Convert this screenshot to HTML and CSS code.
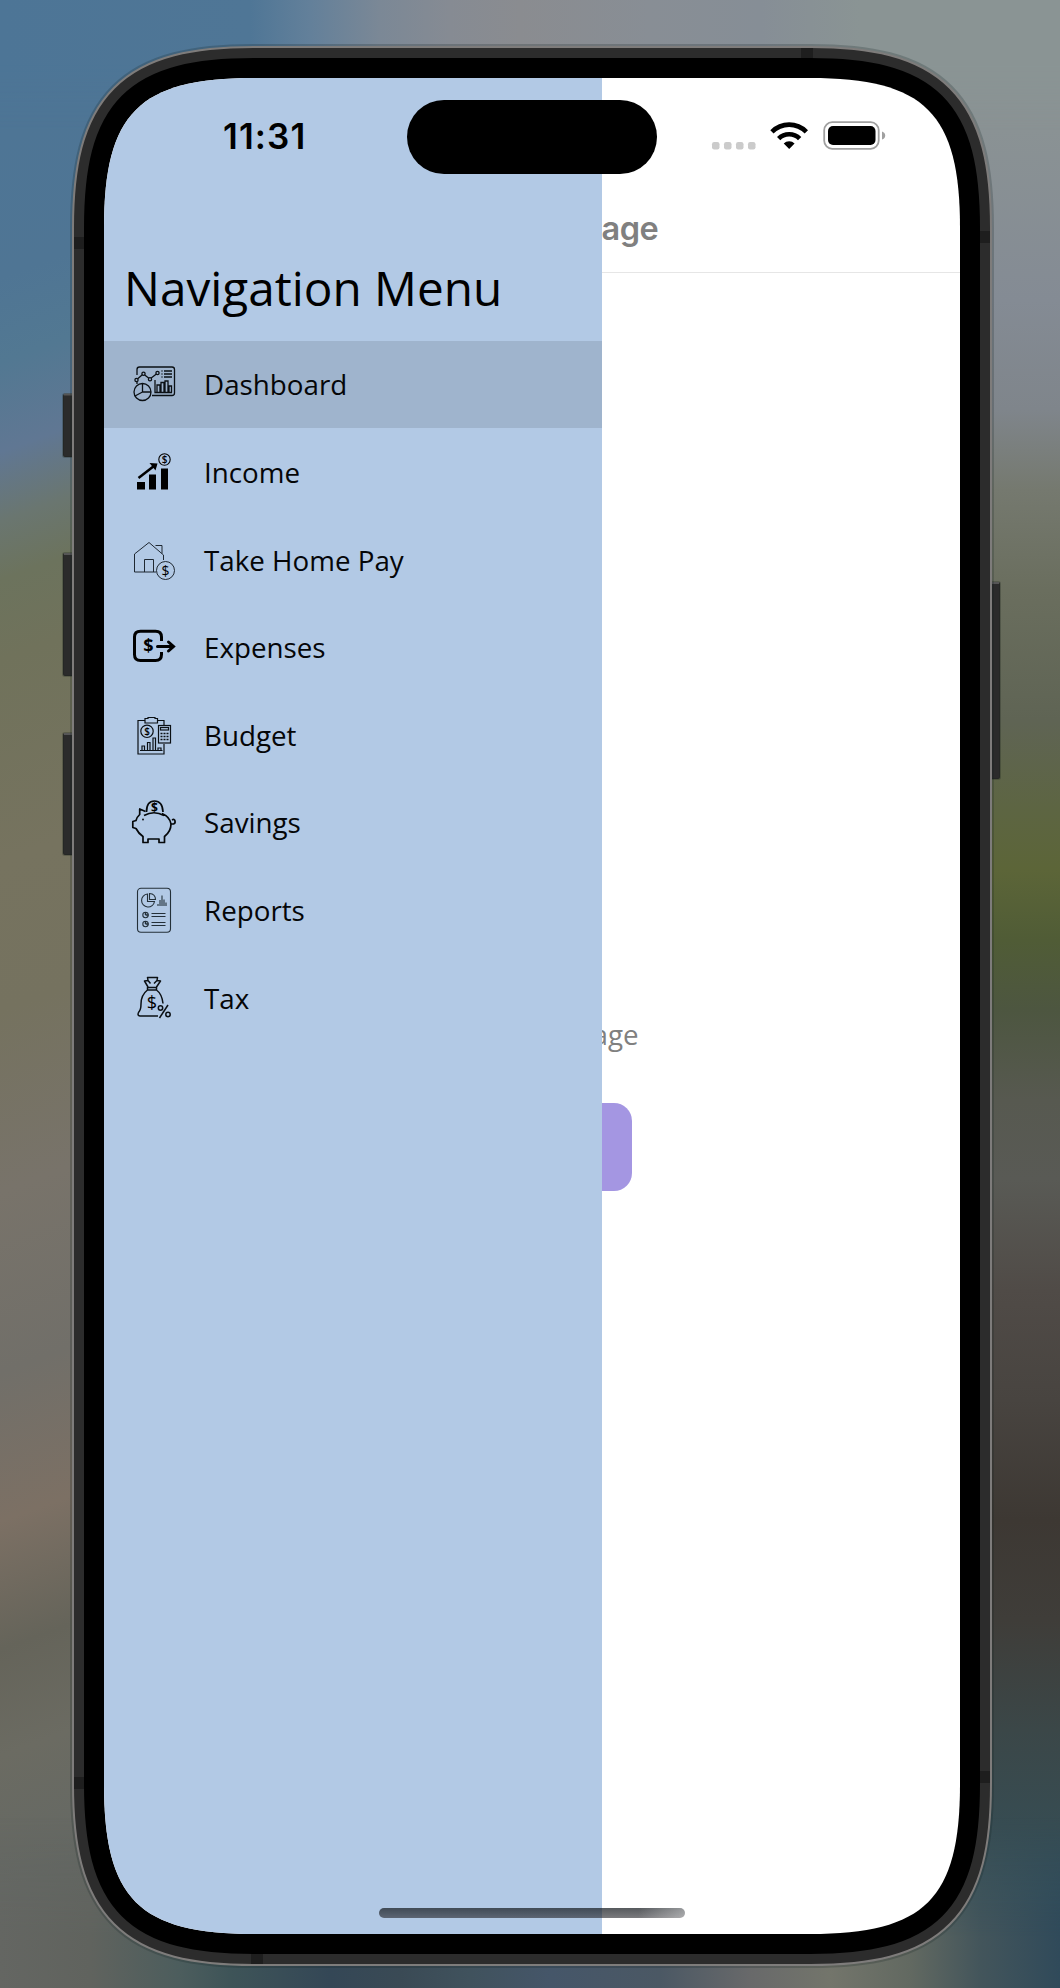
FILE: index.html
```html
<!DOCTYPE html>
<html lang="en">
<head>
<meta charset="utf-8">
<title>Navigation Menu</title>
<link rel="stylesheet" href="styles.css">
</head>
<body>
<div class="backdrop"><div class="side side-left"></div><div class="side side-right"></div></div>
<div class="edge edge-top"></div>
<div class="edge edge-bottom"></div>

<svg class="bezel" viewBox="0 0 1060 1988" aria-hidden="true">
  <defs>
    <path id="outline" transform="translate(104 78)" d="M150 0H706C821 0 856 35 856 150V1706C856 1821 821 1856 706 1856H150C35 1856 0 1821 0 1706V150C0 35 35 0 150 0Z"/>
  </defs>
  <g class="button">
    <rect x="63" y="394" width="12" height="63" rx="2"/>
    <rect x="63" y="553" width="12" height="123" rx="2"/>
    <rect x="63" y="733" width="12" height="122" rx="2"/>
    <rect x="988" y="582" width="12" height="197" rx="2"/>
  </g>
  <g class="button-light">
    <path d="M64 394.500h8M64 554h8M64 734h8M992 583h7"/>
  </g>
  <use href="#outline" class="ring ring-shadow"/>
  <use href="#outline" class="ring ring-rim"/>
  <use href="#outline" class="ring ring-frame"/>
  <path class="antenna" d="M74 237h12v12H74zM74 1777h12v12H74zM801 48h12v11h-12zM979 231h11v12h-11zM979 1771h11v12h-11zM251 1953h12v11h-12z"/>
  <use href="#outline" class="ring ring-glass"/>
</svg>

<main class="screen">
  <section class="page">
    <header class="page-header"><h2 class="page-title">Dashboard Page</h2></header>
    <div class="page-body">
      <p class="page-text">Dashboard Page</p>
      <div class="page-button"></div>
    </div>
  </section>

  <nav class="drawer">
    <h1 class="drawer-title">Navigation Menu</h1>
    <ul class="menu">
      <li class="item active">
        <svg class="icon" viewBox="0 0 48 48"><g fill="none" stroke="#0b1014" stroke-width="1.300">
          <path d="M7 15V9.500Q7 7 9.500 7H42Q44.500 7 44.500 9.500V33Q44.500 35.500 42 35.500H22M7 22V24"/>
          <circle cx="6.500" cy="20" r="1.600"/><circle cx="13.500" cy="13.700" r="1.600"/><circle cx="20" cy="19.300" r="1.600"/><circle cx="27.500" cy="13" r="1.600"/>
          <path d="M7.700 18.800l4.600-4M14.700 15l4.200 3.300M21.200 18l5.200-4M31.500 11h1M34 11h8M31.500 14h1M34 14h8M31.500 17h1M34 17h8"/>
          <path d="M25 20V32.500H42M27 32.500V25h3v7.500M31 32.500V22.500h3v10M35 32.500V21h3v11.500M39 32.500V26h2.500v6.500"/>
          <circle cx="12.500" cy="32" r="8.500"/><path d="M12.500 23.500V32H21M12.500 32L5 36"/></g></svg>
        <span>Dashboard</span></li>
      <li class="item">
        <svg class="icon" viewBox="0 -1.500 48 48"><path d="M7 32.500h8V40H7zM19 25h7v15h-7zM31 19h7v21h-7z"/>
          <path d="M8.500 28.500L24 16.500" fill="none" stroke="#000" stroke-width="2.500"/><path d="M19.500 13.500L27.500 14 25.500 21z"/>
          <circle cx="34.500" cy="10" r="5.700" fill="none" stroke="#000" stroke-width="1.100"/><text x="34.500" y="13.700" class="coin coin-s">$</text></svg>
        <span>Income</span></li>
      <li class="item">
        <svg class="icon" viewBox="0 0 48 48"><g fill="none" stroke="#172028" stroke-width=".95">
          <path d="M4.500 36V18L19 6.500 33.500 19v5M4.500 36H26M14.500 36V23.500h9V36M25.500 9.500H32v8"/><circle cx="35.500" cy="34.500" r="9"/></g><text x="35.500" y="39.500" class="coin coin-m">$</text></svg>
        <span>Take Home Pay</span></li>
      <li class="item">
        <svg class="icon" viewBox="0 -.5 48 48"><g fill="none" stroke="#000" stroke-width="3" stroke-linecap="round">
          <path d="M31.500 17.500V13.500Q31.500 7.700 25.500 7.700H10.500Q4.500 7.700 4.500 13.500V31Q4.500 37 10.500 37H25.500Q31.500 37 31.500 31V28.500" stroke-linecap="butt"/><path d="M27.500 23H43M38.500 18.500L43.500 23 38.500 27.500"/></g><text x="18.500" y="28.800" class="coin coin-b">$</text></svg>
        <span>Expenses</span></li>
      <li class="item">
        <svg class="icon" viewBox="0 0 48 48"><g fill="none" stroke="#0b1014" stroke-width="1.200">
          <path d="M15 9.500H8V43H34V33M27.500 9.500H34V14M15 7.500h3V6.500h7v1h2.500V12H15z"/><circle cx="17" cy="20.300" r="6.200"/>
          <path d="M10 39.500H32.500M12 39.500V35h2.500v4.500M17.500 39.500V31.500H20v8M23 39.500V27h2.500v12.500M28 39.500v-2.500h3v2.500"/><rect x="28.500" y="14.500" width="12" height="17.500"/><rect x="30.500" y="16.500" width="8" height="2.500"/><path d="M30.500 22.500h8M30.500 25.500h8M30.500 28.500h8" stroke-dasharray="2 1" stroke-width="1.400"/></g><text x="17" y="24" class="coin coin-s">$</text></svg>
        <span>Budget</span></li>
      <li class="item">
        <svg class="icon" viewBox="0 0 48 48"><g fill="none" stroke="#05080a" stroke-width="1.700" stroke-linejoin="round">
          <path d="M15.500 13.500L9.700 11V16.500Q6.500 19.500 6 22.500L2.800 23.500V29.500L6 30.500Q8.500 35.500 13 38.500V44.500H18V41H29V44.500H34.500V38.500Q41 33.500 41 26 40 19 32 15.500M14 17.500Q24 12 34 17.500"/>
          <path d="M16.500 14Q16.500 3 24.500 3T33 14M41 26H43.500Q45.500 25.500 45 23T42 22"/></g><circle cx="13" cy="21.500" r=".9"/><text x="24.500" y="14" class="coin coin-p">$</text></svg>
        <span>Savings</span></li>
      <li class="item">
        <svg class="icon" viewBox="0 -.5 48 48"><g fill="none" stroke="#243039" stroke-width="1.100">
          <rect x="7.500" y="1.800" width="33" height="44" rx="3.500"/><path d="M17.500 7.500A6.500 6.500 0 1 0 24.500 15H17.500zM19.500 7V13H25.500Q25.500 7.500 19.500 7zM28 19.500v-2M30 19.500v-6M32 19.500V9M34 19.500v-6.500M36 19.500v-3.500M21.500 27H35.500M21.500 30H35.500M21.500 36H35.500M21.500 39H35.500"/>
          <circle cx="15.500" cy="28.500" r="2.700"/><path d="M15.500 28.500V25.500M15.500 28.500h3M15.500 37.500V34.500M15.500 37.500h3" stroke-width="1.500"/><circle cx="15.500" cy="37.500" r="2.700"/></g></svg>
        <span>Reports</span></li>
      <li class="item">
        <svg class="icon" viewBox="0 0 48 48"><g fill="none" stroke="#0b1014" stroke-width="1.500" stroke-linejoin="round">
          <path d="M18 13L14.500 7 18 6.500 17.500 3.500H27.500L27 6.500 30.500 7 26.500 13M17.500 13.500H26.500V16H17.500zM18 6.500L20.500 9.500M27 6.500L24 9.500M17.500 16Q11 21 11 30 11 36 8.500 38.500 7 41.500 10 42H28M26.500 16Q32 20 33 29.500"/>
          <circle cx="30.500" cy="34" r="2.200"/><circle cx="38" cy="40.500" r="2.200"/><path d="M38 31L29.500 44"/></g><text x="22" y="34.500" class="coin coin-l">$</text></svg>
        <span>Tax</span></li>
    </ul>
  </nav>

  <div class="status">
    <span class="time">11:31</span>
    <div class="island"></div>
    <svg class="status-icons" viewBox="0 0 180 36" aria-hidden="true">
      <g fill="#cbcbcb"><rect x="4" y="24" width="7.500" height="7.500" rx="2.200"/><rect x="16" y="24" width="7.500" height="7.500" rx="2.200"/><rect x="28" y="24" width="7.500" height="7.500" rx="2.200"/><rect x="40" y="24" width="7.500" height="7.500" rx="2.200"/></g>
      <path d="M62.300 12.200A26.500 26.500 0 0 1 100 12.200L96.700 15.500A21.800 21.800 0 0 0 65.600 15.500ZM69 19A17 17 0 0 1 93.300 19L90 22.200A12.600 12.600 0 0 0 72.300 22.200ZM75.700 25.500A7.800 7.800 0 0 1 86.600 25.500L81.200 31Z"/>
      <rect x="116.200" y="4.200" width="54.500" height="26.600" rx="8" fill="none" stroke="#a0a0a0" stroke-width="1.800"/>
      <rect x="120" y="8" width="47.500" height="19" rx="5"/><path d="M174 13.500Q177.200 14.500 177.200 17.500T174 21.500Z" fill="#a0a0a0"/>
    </svg>
  </div>
  <div class="home-indicator"></div>
</main>
</body>
</html>
```
FILE: styles.css
```css
* { box-sizing: border-box; }

body {
  margin: 0;
  width: 1060px;
  height: 1988px;
  padding: 78px 100px 54px 104px;
  position: relative;
  overflow: hidden;
  background: #626863;
  font-family: "Open Sans", "Noto Sans", sans-serif;
}

/* blurred wallpaper around the device */
.backdrop { position: absolute; inset: 0; display: flex; justify-content: space-between; }
.side { width: 200px; }
.side-left {
  background: linear-gradient(160deg, #4d7596 0, #4f7594 260px, #527892 340px, #607793 425px, #6a7670 490px, #6c735d 545px, #70725b 620px, #76735f 810px, #75725f 950px, #78736a 1120px, #716f69 1290px, #7c7064 1430px, #65645a 1550px, #6b6b62 1650px, #646864 1780px, #646662 1880px);
}
.side-right {
  background: linear-gradient(180deg, #8a9494 0, #8a9294 130px, #848b94 300px, #7f858b 410px, #75796f 490px, #6a6e5e 590px, #5f6454 720px, #5d6542 810px, #5c6538 870px, #505c36 940px, #4d5640 1010px, #575950 1100px, #595a55 1180px, #504b47 1290px, #484440 1400px, #3d3833 1520px, #3f3d39 1620px, #3b4748 1730px, #34505a 1900px, #304958 1988px);
}
.edge { position: absolute; left: 0; right: 0; }
.edge-top {
  top: 0; height: 130px;
  background: linear-gradient(90deg, #4d7596 0, #4f7696 250px, #63809a 310px, #7b8896 380px, #868b93 450px, #8a8c90 520px, #888e95 650px, #868e96 760px, #8a9494 860px, #8a9494 1060px);
  mask-image: linear-gradient(#000 50%, transparent);
}
.edge-bottom {
  bottom: 0; height: 170px;
  background: linear-gradient(90deg, #646662 0, #60635e 90px, #4c5d5d 180px, #3e5458 230px, #344756 330px, #3a4a55 400px, #40525d 470px, #455669 550px, #4b5864 660px, #68696a 750px, #73756b 830px, #626961 910px, #43555b 980px, #304a5a 1060px);
  mask-image: linear-gradient(transparent, #000 70%);
}

.bezel { position: absolute; left: 0; top: 0; width: 1060px; height: 1988px; }
.ring { fill: none; }
.ring-shadow { stroke: rgba(20, 30, 30, .22); stroke-width: 68px; }
.ring-rim { stroke: #7e7c7b; stroke-width: 64px; }
.ring-frame { stroke: #2c2c2c; stroke-width: 60px; }
.ring-glass { stroke: #000; stroke-width: 40px; }
.antenna { fill: #1e1e1e; }
.button { fill: #2b2b2b; stroke: rgba(20, 28, 20, .25); stroke-width: 2px; }
.button-light { stroke: #565656; stroke-width: 2px; }

.screen {
  position: relative;
  width: 856px;
  height: 1856px;
  display: grid;
  background: #fff;
  clip-path: path("M150 0H706C821 0 856 35 856 150V1706C856 1821 821 1856 706 1856H150C35 1856 0 1821 0 1706V150C0 35 35 0 150 0Z");
}
.page, .drawer { grid-area: 1 / 1; }

.page { display: flex; flex-direction: column; }
.page-header {
  height: 195px;
  padding-top: 131px;
  border-bottom: 1px solid #e6e6e6;
  text-align: center;
}
.page-title {
  margin: 0;
  font: 600 32.500px/40px Inter, sans-serif;
  letter-spacing: -.4px;
  color: #808080;
}
.page-body { display: flex; flex-direction: column; align-items: center; padding-top: 739px; }
.page-text { margin: 0; font-size: 27.750px; line-height: 44px; color: #808080; }
.page-button { width: 200px; height: 88px; margin-top: 47px; border-radius: 18px; background: #a496e2; }

.drawer {
  width: 497.600px;
  padding-top: 176px;
  background: #b2c9e5;
  z-index: 1;
}
.drawer-title {
  margin: 0 0 18.600px;
  padding-left: 20px;
  font-size: 47.700px;
  font-weight: 400;
  line-height: 68px;
  color: #000;
}
.menu { margin: 0; padding: 0; list-style: none; }
.item {
  height: 87.600px;
  padding-left: 26px;
  display: flex;
  align-items: center;
  gap: 26px;
  font-size: 27.750px;
  color: #050608;
}
.active { background: #9fb4cd; }
.icon { width: 48px; height: 48px; flex: none; }
.coin { font-family: "Open Sans", sans-serif; text-anchor: middle; fill: #000; }
.coin-s { font-size: 10px; font-weight: 600; }
.coin-p { font-size: 12px; font-weight: 700; }
.coin-m { font-size: 14px; }
.coin-b { font-size: 18px; font-weight: 700; }
.coin-l { font-size: 18px; }

/* system overlays */
.status { position: absolute; inset: 22px 0 auto; height: 74px; z-index: 2; display: flex; align-items: center; }
.time { width: 303px; padding: 0 0 2px 119px; font: 600 35px/40px Inter, sans-serif; letter-spacing: 1.100px; }
.island { width: 250px; height: 74px; border-radius: 37px; background: #000; }
.status-icons { width: 180px; height: 36px; margin: 0 0 2px 51px; }
.home-indicator {
  position: absolute;
  z-index: 2;
  left: 275px;
  top: 1830px;
  width: 306px;
  height: 10px;
  border-radius: 5px;
  background: linear-gradient(90deg, transparent 85%, rgba(255, 255, 255, .38)), linear-gradient(rgba(20, 25, 30, .72), rgba(35, 35, 40, .6));
}
```
